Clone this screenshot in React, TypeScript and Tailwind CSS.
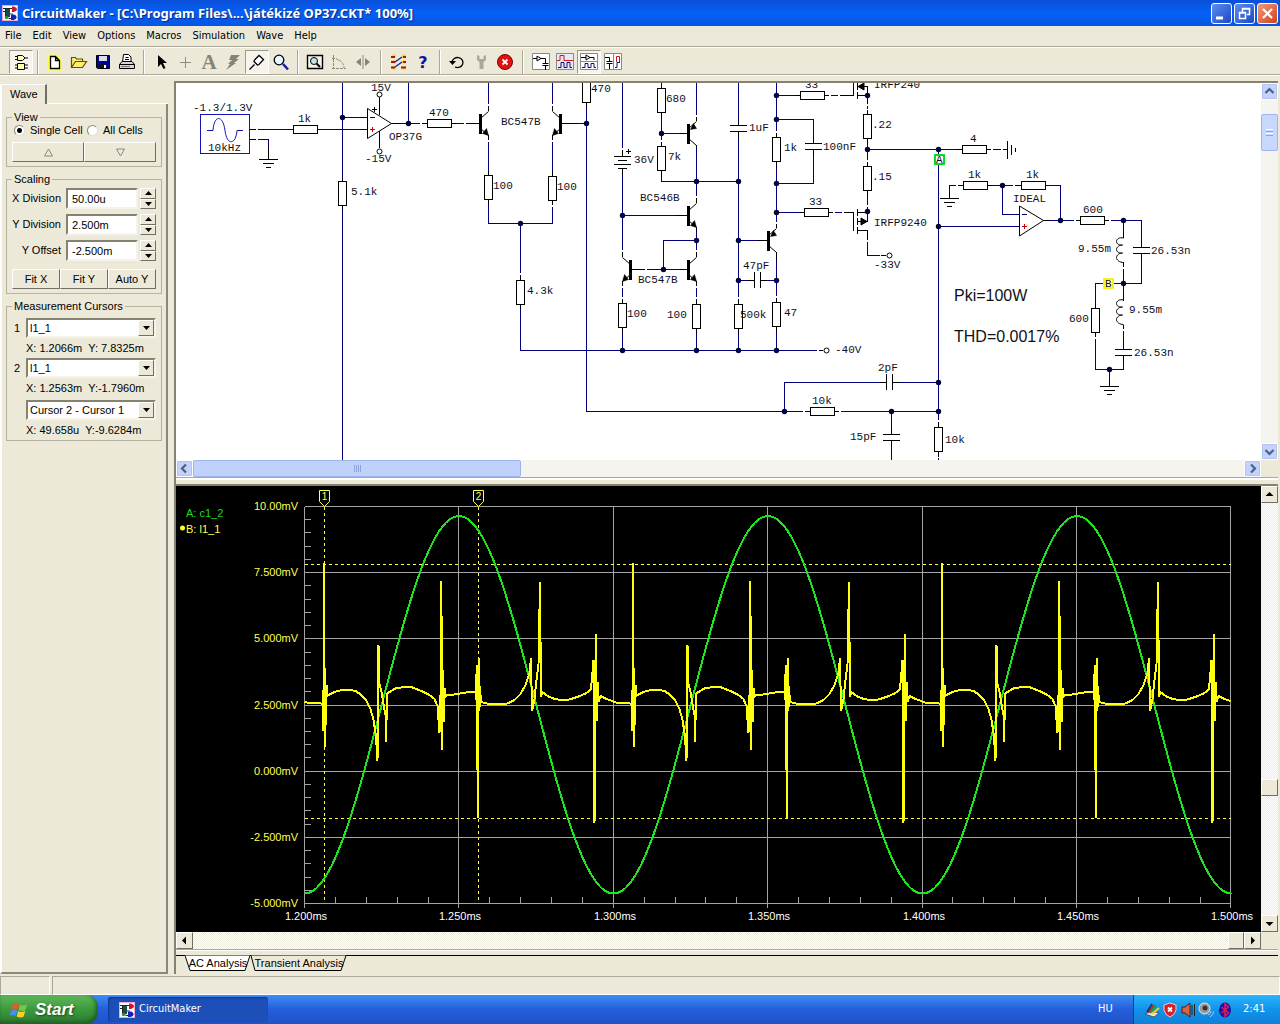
import { useState } from 'react';
import type { ReactNode } from 'react';

const UI = "font-['DejaVu_Sans_Condensed','DejaVu_Sans',sans-serif]";

/* ---------- small shared pieces ---------- */

function AppIcon() {
  return (
    <svg width="16" height="16" viewBox="0 0 16 16" className="shrink-0">
      <rect x="0.5" y="0.5" width="15" height="15" fill="#fff" stroke="#f0a8d0" />
      <path d="M1 3.500h9M1 6.500h5M3.500 3v9h3M6.500 13.500h4" stroke="#222" fill="none" />
      <path d="M4 4h4v8H4z" fill="#1c4a44" />
      <path d="M8 8h3v2H8z" fill="#8ab" />
      <path d="M10 1.500h2q3 1 3 2.700t-3 2.700h-2z" fill="#d0122b" />
      <path d="M9 9.500h2.500q3 .5 3 2.700t-3 2.700H9z" fill="#1420b8" />
      <circle cx="4.500" cy="12.500" r="1.700" fill="#199a3a" />
    </svg>
  );
}

const menus = ['File', 'Edit', 'View', 'Options', 'Macros', 'Simulation', 'Wave', 'Help'];

function TitleBar() {
  return (
    <header className="flex h-[26px] items-center gap-1 bg-linear-to-b from-[#0a4fd8] via-[#0560f6] to-[#0455e4] pl-[2px] pr-[2px]">
      <AppIcon />
      <h1 className="flex-1 whitespace-nowrap font-['Noto_Sans',sans-serif] text-[13px] leading-5 font-bold text-white [text-shadow:1px_1px_1px_#0a2a80]">
        CircuitMaker - [C:\Program Files\...\játékizé OP37.CKT* 100%]
      </h1>
      <div className="flex gap-[2px]">
        <button aria-label="Minimize" className="size-[21px] rounded-[3px] border border-white bg-linear-to-br from-[#5f8df0] to-[#1c47c4]">
          <svg viewBox="0 0 19 19"><path d="M4 14h7" stroke="#fff" strokeWidth="3" /></svg>
        </button>
        <button aria-label="Restore" className="size-[21px] rounded-[3px] border border-white bg-linear-to-br from-[#5f8df0] to-[#1c47c4]">
          <svg viewBox="0 0 19 19">
            <path d="M7.500 8V4.500h7v6H12M7 5h8" stroke="#fff" fill="none" strokeWidth="1.500" />
            <path d="M4.500 8.500h6v6h-6zM4 9h7" stroke="#fff" fill="none" strokeWidth="1.500" />
          </svg>
        </button>
        <button aria-label="Close" className="size-[21px] rounded-[3px] border border-white bg-linear-to-br from-[#f0997c] to-[#d03c12]">
          <svg viewBox="0 0 19 19"><path d="M5 5l9 9M14 5l-9 9" stroke="#fff" strokeWidth="2.200" /></svg>
        </button>
      </div>
    </header>
  );
}

/* ---------- toolbar ---------- */

function Tool({ name, pressed, children }: { name: string; pressed?: boolean; children: ReactNode }) {
  return (
    <button
      aria-label={name}
      className={
        pressed
          ? 'flex h-6 w-6 items-center justify-center border border-t-[#9c9a8c] border-l-[#9c9a8c] border-r-white border-b-white bg-[#f6f4ec]'
          : 'flex h-6 w-6 items-center justify-center'
      }
    >
      <svg width="18" height="18" viewBox="0 0 18 18" className="shrink-0 overflow-visible" fill="none" stroke="#000">
        {children}
      </svg>
    </button>
  );
}

function Sep({ wide }: { wide?: boolean }) {
  return (
    <div className={wide ? 'flex w-3 justify-center' : 'flex w-[10px] justify-center'}>
      <div className="h-6 w-[2px] border-l border-[#aca899] bg-white" />
    </div>
  );
}

function Toolbar() {
  return (
    <div className="flex h-[30px] items-center border-t border-[#aca899] pl-[9px] shadow-[inset_0_1px_0_#fff,inset_0_-1px_0_#fff,inset_0_-2px_0_#aca899]">
      <Tool name="Parts" pressed>
        <path d="M5.500 2.500h5l2.500 2.500-2.500 2.500h-5zM3 3.500h2M3 6.500h2M13 5h3" fill="#ffffb0" />
        <path d="M5.500 10.500h7v6h-7zM3 12h2M3 15h2M13 12h3M13 15h3" fill="#ffffb0" />
      </Tool>
      <Sep />
      <Tool name="New">
        <path d="M4 3.500h6l4 4v8H4z" stroke="#ffff40" strokeWidth="4" />
        <path d="M4.500 3.500h5l4 4v8h-9zM9.500 3.500v4h4" fill="#fff" strokeWidth="1.300" />
      </Tool>
      <Tool name="Open">
        <path d="M1.500 14.500V4.500h4l1 1.500h6v3M1.500 14.500l4-6h11l-4 6z" fill="#ffee70" stroke="#5c5200" strokeWidth="1.200" />
      </Tool>
      <Tool name="Save">
        <path d="M2.500 2.500h13v13h-12l-1-1z" fill="#00009c" />
        <path d="M5 3h8v5H5z" fill="#dcdce8" stroke="none" />
        <path d="M5 11h7v4H5z" fill="#111" stroke="none" />
        <path d="M10 12h2v3h-2z" fill="#fff" stroke="none" />
      </Tool>
      <Tool name="Print">
        <path d="M4.500 9l1-7.500h5l2.500 2.500V9M7.500 4.500h3M7 6.500h4" fill="#fff" />
        <path d="M1.500 11.500l2.500-3h10l2.500 3v4h-15zM1.500 11.500h15" fill="#d8d7d0" />
        <path d="M3 13.500h9" stroke="#777" />
      </Tool>
      <Sep />
      <Tool name="Select">
        <path d="M6 2v12l3-3 2.500 5 2-1-2.500-5h4z" fill="#000" stroke="none" />
      </Tool>
      <Tool name="Wire"><path d="M9.500 4v11M4 9.500h11" stroke="#8e8c80" /></Tool>
      <Tool name="Text">
        <text x="9" y="16" textAnchor="middle" fontFamily="Liberation Serif, serif" fontSize="21" fontWeight="bold" fill="#858478" stroke="none">A</text>
      </Tool>
      <Tool name="Delete">
        <path d="M7 2h9l-4 4h3l-5 4h2L2 17l4-6H4l4-4H5z" fill="#858478" stroke="none" />
      </Tool>
      <Tool name="Probe" pressed>
        <path d="M1.500 16.500l5-5M6 8.500l3.500 3.500 1.500-.5 4.500-5-4.500-4-4.500 4.500z" fill="#fff" strokeWidth="1.300" />
      </Tool>
      <Tool name="Zoom">
        <circle cx="7" cy="7" r="4.800" fill="#e8f4ff" strokeWidth="1.300" />
        <path d="M11 11l5 5.500" stroke="#1620b0" strokeWidth="2.600" />
      </Tool>
      <Sep />
      <Tool name="Fit">
        <path d="M1.500 2.500h15v13h-15z" strokeWidth="1.400" fill="#f4f3ea" />
        <circle cx="8" cy="8" r="3.500" fill="#bfe4ea" />
        <path d="M10.500 10.500l3.500 3.500" strokeWidth="2" />
      </Tool>
      <Tool name="Rotate">
        <path d="M3.500 2v14M2 15.500h14M2 5.500h4l3 2M9 7q5 3 5 8" stroke="#8e8c80" strokeDasharray="3 1" />
      </Tool>
      <Tool name="Mirror">
        <path d="M9 2v14" stroke="#8e8c80" />
        <path d="M7 5v8L2 9zM11 5v8l5-4z" fill="#858478" stroke="none" />
      </Tool>
      <Sep wide />
      <Tool name="Digital">
        <path d="M2 3h4M2 9h4M2 15h4M12 3h4M12 9h4M12 15h4" stroke="#ffd820" strokeWidth="3" />
        <path d="M1 4h4M1 9h4M1 14.500h4M13 4h3M13 9h3M11 14.500h5" stroke="#a01818" strokeWidth="2" />
        <path d="M5 9l7-5M5 14l7-5" stroke="#1020a0" strokeWidth="1.300" />
      </Tool>
      <Tool name="Help">
        <text x="9" y="15" textAnchor="middle" fontFamily="DejaVu Sans, sans-serif" fontSize="16" fontWeight="bold" fill="#1212a8" stroke="none">?</text>
      </Tool>
      <Sep />
      <Tool name="Reset">
        <path d="M4 9a5.500 5 0 1 1 3 5" strokeWidth="1.300" />
        <path d="M1 8h7l-3.500 4z" fill="#000" stroke="none" />
      </Tool>
      <Tool name="Options">
        <path d="M5 2v5l2.500 2v7h4V9L14 7V2l-2.500 1v3h-4V3z" fill="#aaa89c" stroke="none" />
      </Tool>
      <Tool name="Stop">
        <circle cx="9" cy="9" r="7.500" fill="#e01010" stroke="#7c0000" />
        <path d="M6.500 6.500l5 5M11.500 6.500l-5 5" stroke="#fff" strokeWidth="1.800" />
      </Tool>
      <Sep wide />
      <Tool name="Schematic only">
        <path d="M0.500 0.500h17v16h-17z" fill="#fff" stroke="#888" />
        <path d="M1 5.500h4M5 3v5l4-2.500zM9 5.500h4.500V10M10.500 10.500h6M10.500 12.500h6M13.500 13v4" />
      </Tool>
      <Tool name="Waves only">
        <path d="M0.500 0.500h17v16h-17z" fill="#e9e8f4" stroke="#888" />
        <path d="M1 7.500h3v-5h4v5h9" stroke="#d01818" />
        <path d="M2 14.500h3v-5h3v5h3v-5h3v5h2" stroke="#101070" />
      </Tool>
      <Tool name="Split horizontally" pressed>
        <path d="M0.500 0.500h17v16h-17zM0 8.500h18" fill="#fff" stroke="#888" />
        <path d="M1 4.500h5M6 2v5l4-2.500zM10 4.500h4V7" />
        <path d="M2 14.500h3v-4h3v4h3v-4h3v4h2" stroke="#101070" />
      </Tool>
      <Tool name="Split vertically">
        <path d="M0.500 0.500h17v16h-17zM9.500 0v17" fill="#fff" stroke="#888" />
        <path d="M1 4.500h4.500V8M2.500 8.500h6M2.500 10.500h6M5.500 11v5" />
        <path d="M12.500 9V3.500h3V9" stroke="#d01818" />
        <path d="M11 14.500h2V9.500h3" stroke="#101070" />
      </Tool>
    </div>
  );
}

/* ---------- side panel ---------- */

const raised = 'border border-t-white border-l-white border-r-[#716f64] border-b-[#716f64] bg-[#ece9d8]';
const sunken = 'border-2 border-t-[#85836f] border-l-[#85836f] border-r-[#f6f4ea] border-b-[#f6f4ea] bg-white';

function Group({ title, children }: { title: string; children: ReactNode }) {
  return (
    <fieldset className="mb-[6px] border border-[#b5b2a0] px-[5px] pb-1">
      <legend className="px-[2px] leading-3">{title}</legend>
      {children}
    </fieldset>
  );
}

function ScaleRow({ id, label, initial }: { id: string; label: string; initial: string }) {
  const [value, setValue] = useState(initial);
  return (
    <div className="mb-[5px] flex h-[21px] items-center">
      <label htmlFor={id} className="flex-1 whitespace-nowrap pr-[5px] text-right">{label}</label>
      <input
        id={id}
        value={value}
        onChange={(e) => setValue(e.target.value)}
        className={`${sunken} h-[21px] w-[72px] px-1`}
      />
      <div className="ml-[2px] flex h-[21px] w-4 flex-col">
        <button aria-label={`${label} up`} className={`${raised} flex flex-1 items-center justify-center`}>
          <svg width="7" height="4"><path d="M0 4l3.500-4L7 4z" /></svg>
        </button>
        <button aria-label={`${label} down`} className={`${raised} flex flex-1 items-center justify-center`}>
          <svg width="7" height="4"><path d="M0 0l3.500 4L7 0z" /></svg>
        </button>
      </div>
    </div>
  );
}

function CursorSelect({ label, options }: { label: string; options: string[] }) {
  return (
    <div className="relative flex-1">
      <select aria-label={label} className={`${sunken} block h-5 w-full appearance-none pl-[2px]`}>
        {options.map((o) => (
          <option key={o}>{o}</option>
        ))}
      </select>
      <span className={`${raised} pointer-events-none absolute top-[2px] right-[2px] flex h-4 w-4 items-center justify-center`}>
        <svg width="7" height="4"><path d="M0 0l3.500 4L7 0z" /></svg>
      </span>
    </div>
  );
}

function SidePanel() {
  const [view, setView] = useState('single');
  const radio =
    'size-[11px] appearance-none rounded-full border border-t-[#8a887a] border-l-[#8a887a] border-r-[#e4e1d2] border-b-[#e4e1d2] bg-white checked:bg-[radial-gradient(#000_2px,#fff_3px)]';
  return (
    <aside className="flex w-[168px] shrink-0 flex-col pt-2 font-['Liberation_Sans',Arial,sans-serif] text-[11px]">
      <div className="flex h-5">
        <button className="h-5 w-[47px] border-t border-r-2 border-l-2 border-t-white border-r-[#716f64] border-l-white text-left">
          <span className="pl-2">Wave</span>
        </button>
        <div className="flex-1 border-b border-white" />
      </div>
      <div className="flex-1 border-r-2 border-b-2 border-l-2 border-r-[#8a887a] border-b-[#8a887a] border-l-white px-1 pt-[7px]">
        <Group title="View">
          <div className="flex h-[15px] items-center pl-[2px]">
            <input id="single" type="radio" name="cells" className={radio} checked={view === 'single'} onChange={() => setView('single')} />
            <label htmlFor="single" className="w-[62px] pl-[5px] whitespace-nowrap">Single Cell</label>
            <input id="all" type="radio" name="cells" className={radio} checked={view === 'all'} onChange={() => setView('all')} />
            <label htmlFor="all" className="pl-[5px] whitespace-nowrap">All Cells</label>
          </div>
          <div className="mt-1 grid grid-cols-2">
            <button aria-label="Previous cell" className={`${raised} flex h-5 items-center justify-center`}>
              <svg width="11" height="9"><path d="M1.500 8L5.500 1l4 7z" fill="none" stroke="#8a887a" /></svg>
            </button>
            <button aria-label="Next cell" className={`${raised} flex h-5 items-center justify-center`}>
              <svg width="11" height="9"><path d="M1.500 1l4 7 4-7z" fill="none" stroke="#8a887a" /></svg>
            </button>
          </div>
        </Group>
        <Group title="Scaling">
          <div className="pt-[3px]">
            <ScaleRow id="xdiv" label="X Division" initial="50.00u" />
            <ScaleRow id="ydiv" label="Y Division" initial="2.500m" />
            <ScaleRow id="yoff" label="Y Offset" initial="-2.500m" />
          </div>
          <div className="mt-2 grid grid-cols-3">
            <button className={`${raised} h-5`}>Fit X</button>
            <button className={`${raised} h-5`}>Fit Y</button>
            <button className={`${raised} h-5`}>Auto Y</button>
          </div>
        </Group>
        <Group title="Measurement Cursors">
          <div className="flex items-center pt-[6px]">
            <span className="w-[14px] pl-[2px]">1</span>
            <CursorSelect label="Cursor 1 signal" options={['l1_1', 'c1_2']} />
          </div>
          <p className="pl-[14px] leading-5 whitespace-pre">X: 1.2066m  Y: 7.8325m</p>
          <div className="flex items-center">
            <span className="w-[14px] pl-[2px]">2</span>
            <CursorSelect label="Cursor 2 signal" options={['l1_1', 'c1_2']} />
          </div>
          <p className="pl-[14px] leading-5 whitespace-pre">X: 1.2563m  Y:-1.7960m</p>
          <div className="flex pt-[2px] pl-[14px]">
            <CursorSelect label="Difference" options={['Cursor 2 - Cursor 1', 'Cursor 1 - Cursor 2']} />
          </div>
          <p className="-mb-1 pl-[14px] leading-5 whitespace-pre">X: 49.658u  Y:-9.6284m</p>
        </Group>
      </div>
    </aside>
  );
}

/* ---------- schematic ---------- */

// navy connection wires
const wires = [
  'M258 129.500H294M317 129.500H362M258 139.500H268.500V150M342.500 83V177M342.500 210V460M342.500 117.500H362',
  'M400 123.500H420M408.500 83V123.500M456 123.500H464M488.500 83V104M488.500 142V171M488.500 204V223.500H552.500V207M552.500 142V172M552.500 83V104',
  'M520.500 223.500V273M520.500 309V350.500H817M578 123.500H586.500M586.500 107V411.500H803M841 411.500H938.500',
  'M622.500 83V148M622.500 176V250M622.500 215.500H676M622.500 288V297M622.500 333V350.500M647 269.500H680M663.500 269.500V240.500H696.500',
  'M661.500 118V140M661.500 133.500H680M661.500 177V181.500H738.500M696.500 83V115M696.500 147V196M696.500 232V250M696.500 288V297M696.500 334V350.500',
  'M738.500 83V119M738.500 138V297M738.500 334V350.500M738.500 240.500H758M738.500 280.500H748M767 280.500H776.500',
  'M776.500 83V131M776.500 119.500H813.500V137M813.500 156V183.500H776.500M776.500 168V222M776.500 260V296M776.500 332V350.500M776.500 95.500H795M831 95.500H838M776.500 212.500H799M835 212.500H842',
  'M867.500 106V109M867.500 143V160M867.500 196V205M867.500 149.500H956M867.500 242V255.500H880M993 149.500H1001M938.500 149.500V420M938.500 226.500H1019',
  'M949.500 192V185.500H956M992 185.500H1013M1002.500 185.500V214.500H1019M1046 185.500H1060.500V220.500M1050 220.500H1074M1111 220.500H1141.500V241M1141.500 260V283.500H1095.500V303M1123.500 220.500V231M1123.500 269V294',
  'M1123.500 331V343M1123.500 362V369.500H1095.500V339M1109.500 369.500V380M784.500 411.500V382.500H880M899 382.500H938.500M891.500 411.500V428M891.500 447V460M938.500 458V460',
].join('');

// black component leads, plates and ground bars
const leads = [
  'M250 129.500H256M250 139.500H256M268.500 148V159.500M259 159.500H277.500M263 163.500H273.500M266 167.500H270.500',
  'M362 117.500H367.500M362 129.500H367.500M379.500 97V115M379.500 131V148M391 123.500H400M422 123.500H428M451 123.500H456M466 123.500H480M562 123.500H578M342.500 177V182M342.500 205V210',
  'M488.500 106V111M488.500 135V140M552.500 106V111M552.500 135V140M488.500 171V176M488.500 199V204M552.500 172V177M552.500 200V205M520.500 275V280M520.500 304V309M586.500 102V107',
  'M614 156.500H630.500M617.500 160.500H627M614 164.500H630.500M617.500 168.500H627M622.500 150V156M622.500 169V176M676 215.500H688M632 269.500H645M680 269.500H688M680 133.500H688',
  'M622.500 252V257M622.500 281V286M696.500 252V257M696.500 281V286M696.500 198V203M696.500 227V232M696.500 117V121M696.500 145V147M622.500 299V303M622.500 328V333M696.500 299V304M696.500 329V334',
  'M661.500 83V88M661.500 113V118M661.500 142V146M661.500 171V177M730 125.500H746.500M730 131.500H746.500M738.500 119V125M738.500 132V138M738.500 299V304M738.500 329V334',
  'M776.500 133V137M776.500 162V168M776.500 224V228M776.500 252V260M776.500 298V302M776.500 327V332M754.500 272V288M760.500 272V288M748 280.500H754M761 280.500H767M758 240.500H768',
  'M805 143.500H821.500M805 149.500H821.500M813.500 137V143M813.500 150V156M795 95.500H800M825 95.500H829M840 95.500H853.500V83M799 212.500H804M829 212.500H833M844 212.500H853.500V231',
  'M857.500 83V90M857.500 92V99M857.500 95.500H867.500V104M857.500 86.500H867.500V95M867.500 110V114M867.500 139V143M867.500 162V166M867.500 191V196M867.500 207V221.500H857.500M857.500 209V216M857.500 218V225M857.500 227V234M857.500 212.500H867.500M857.500 230.500H867.500V240M819 350.500H823M881 255.500H886',
  'M956 149.500H962M987 149.500H991M1003 149.500H1007M1007.500 141V159M1011.500 145V155M1015.500 148V152M958 185.500H963M988 185.500H992M1015 185.500H1021M949.500 192V198.500M940 198.500H958.500M944 202.500H954.500M947 206.500H951.500',
  'M1043 220.500H1050M1076 220.500H1080M1105 220.500H1109M1133 247.500H1149.500M1133 253.500H1149.500M1141.500 241V247M1141.500 254V260M1115 349.500H1131.500M1115 355.500H1131.500M1123.500 343V349M1123.500 356V362M1095.500 303V308M1095.500 333V337',
  'M1123.500 231V238M1123.500 262V267M1123.500 294V301M1123.500 325V329M1109.500 380V386.500M1100 386.500H1118.500M1104 390.500H1114.500M1107 394.500H1111.500',
  'M886.500 374V390M892.500 374V390M880 382.500H886M893 382.500H899M805 411.500H810M835 411.500H839M883 434.500H899.500M883 440.500H899.500M891.500 428V434M891.500 441V447M938.500 422V427M938.500 452V457',
].join('');

const horizontalResistors = [
  [305, 129], [439, 123], [812, 95], [816, 212], [974, 149], [975, 185], [1033, 185], [1092, 220], [822, 411],
];

const verticalResistors = [
  [342, 193], [488, 187], [552, 188], [586, 90], [520, 292], [622, 315], [696, 316], [661, 100], [661, 158],
  [738, 316], [776, 149], [776, 314], [867, 126], [867, 178], [1095, 320], [938, 439],
];

const dots = [
  [342, 117], [408, 123], [520, 223], [586, 123], [622, 215], [622, 350], [663, 269], [696, 240], [696, 181], [696, 350],
  [661, 133], [738, 181], [738, 240], [738, 280], [738, 350], [776, 95], [776, 119], [776, 183], [776, 212], [776, 280],
  [776, 350], [867, 95], [867, 149], [867, 211], [938, 149], [938, 226], [938, 382], [938, 411], [784, 411], [891, 411],
  [1002, 185], [1060, 220], [1123, 220], [1123, 283], [1109, 369],
];

const partLabels: [number, number, string][] = [
  [193, 111, '-1.3/1.3V'], [208, 151, '10kHz'], [298, 122, '1k'], [371, 91, '15V'], [365, 162, '-15V'], [389, 140, 'OP37G'],
  [429, 116, '470'], [351, 195, '5.1k'], [501, 125, 'BC547B'], [493, 189, '100'], [557, 190, '100'], [591, 92, '470'],
  [527, 294, '4.3k'], [634, 163, '36V'], [666, 102, '680'], [668, 160, '7k'], [640, 201, 'BC546B'], [638, 283, 'BC547B'],
  [627, 317, '100'], [667, 318, '100'], [749, 131, '1uF'], [740, 318, '500k'], [743, 269, '47pF'], [784, 151, '1k'],
  [784, 316, '47'], [823, 150, '100nF'], [805, 88, '33'], [809, 205, '33'], [872, 128, '.22'], [872, 180, '.15'],
  [874, 88, 'IRFP240'], [874, 226, 'IRFP9240'], [874, 268, '-33V'], [835, 353, '-40V'], [878, 371, '2pF'], [812, 404, '10k'],
  [850, 440, '15pF'], [945, 443, '10k'], [970, 142, '4'], [968, 178, '1k'], [1026, 178, '1k'], [1013, 202, 'IDEAL'],
  [1083, 213, '600'], [1078, 252, '9.55m'], [1151, 254, '26.53n'], [1069, 322, '600'], [1129, 313, '9.55m'], [1134, 356, '26.53n'],
];

// x, y of the base bar, side the leads are on, pnp has its arrow on top
const transistors: [number, number, number, boolean][] = [
  [480, 123, 1, false], [560, 123, -1, false], [688, 133, 1, true], [688, 215, 1, false],
  [630, 269, -1, false], [688, 269, 1, false], [768, 240, 1, true],
];

function Transistor({ x, y, side, pnp }: { x: number; y: number; side: number; pnp: boolean }) {
  const end = x + side * 8;
  const tip = pnp
    ? `M${x + side * 2} ${y - 4}l${side * 3} -6l${side * 3} 5z`
    : `M${end} ${y + 12}l${-side * 2} -7l${-side * 4} 5z`;
  return (
    <g transform="translate(0.5 0.5)" stroke="#000">
      <path d={`M${x} ${y - 5}L${end} ${y - 12}M${x} ${y + 5}L${end} ${y + 12}`} />
      <path d={`M${x} ${y - 10}v20`} strokeWidth="3" shapeRendering="crispEdges" />
      <path d={tip} fill="#000" strokeWidth="0.500" />
    </g>
  );
}

function Schematic() {
  return (
    <svg width="1085" height="377" viewBox="176 83 1085 377" className="block shrink-0" fill="none">
      <path d={wires} stroke="#00007c" shapeRendering="crispEdges" />
      <path d={leads} stroke="#000" shapeRendering="crispEdges" />
      {horizontalResistors.map(([x, y]) => (
        <rect key={`${x}-${y}`} x={x - 11.5} y={y - 3.5} width="24" height="8" fill="#fff" stroke="#000" shapeRendering="crispEdges" />
      ))}
      {verticalResistors.map(([x, y]) => (
        <rect key={`${x}-${y}`} x={x - 3.5} y={y - 11.5} width="8" height="24" fill="#fff" stroke="#000" shapeRendering="crispEdges" />
      ))}
      {dots.map(([x, y]) => (
        <circle key={`${x}-${y}`} cx={x + 0.5} cy={y + 0.5} r="2.700" fill="#04043c" />
      ))}
      {transistors.map(([x, y, side, pnp]) => (
        <Transistor key={`${x}-${y}`} x={x} y={y} side={side} pnp={pnp} />
      ))}

      {/* signal source */}
      <rect x="200.500" y="114.500" width="49" height="39" stroke="#1414b4" shapeRendering="crispEdges" />
      <path d="M207 130.500h6c1-16 10-16 12 0s11 14 12 0h6" stroke="#1414b4" />

      {/* op amps */}
      <path d="M367.500 108.500v30l24-15zM1019.500 206v30l24-15.500z" fill="#fff" stroke="#000" />
      <path d="M379.500 97v18M379.500 131v17M372 109.500h5M374.500 107v5" stroke="#000" />
      <path d="M370 117.500h5M1022 214.500h5" stroke="#00007c" />
      <path d="M370 129.500h5M372.500 127v5M1022 226.500h5M1024.500 224v5" stroke="#d00000" />

      {/* coils */}
      <path
        d="M1123.500 238c-4-1-7 1-7 3.500s3 4 6 3.500c-3 0-6 2-6 4.500s3 4 6 3.500c-3 0-6 2-6 4.500s3 5 7 5M1123.500 300c-4-1-7 1-7 3.500s3 4 6 3.500c-3 0-6 2-6 4.500s3 4 6 3.500c-3 0-6 2-6 4.500s3 5 7 5"
        stroke="#000"
      />

      {/* mosfet arrows, battery sign */}
      <path d="M867 221.500l-6-3.500v7zM858 86.500l6-3.500v7z" fill="#000" stroke="#000" />
      <path d="M626 151.500h5M628.500 149v5" stroke="#000" />

      {[[379, 94], [379, 151], [826, 350], [889, 255]].map(([x, y]) => (
        <circle key={`${x}-${y}`} cx={x + 0.5} cy={y + 0.5} r="2.500" fill="#fff" stroke="#000" />
      ))}

      <g fill="#10101c" fontFamily="Liberation Mono, Courier New, monospace" fontSize="11">
        {partLabels.map(([x, y, text]) => (
          <text key={`${x}-${y}`} x={x} y={y}>{text}</text>
        ))}
        <rect x="935" y="155" width="9" height="9" fill="#fff" stroke="#08dc28" strokeWidth="2" />
        <text x="936" y="163">A</text>
        <rect x="1104" y="279" width="9" height="9" fill="#fffcb4" stroke="#f8f020" strokeWidth="2" />
        <text x="1105" y="287">B</text>
      </g>
      <g fill="#101018" fontFamily="Liberation Sans, Arial, sans-serif" fontSize="16">
        <text x="954" y="301">Pki=100W</text>
        <text x="954" y="342">THD=0.0017%</text>
      </g>
    </svg>
  );
}

/* ---------- wave plot ---------- */

const LEFT = 304.5;
const TOP = 506.5;
const PERIOD = 309;
const STEP_X = 154.4;
const STEP_Y = 66.17;

// one period of trace B, x relative to the left axis
const ripple: [number, number][] = [
  [0, 702], [5, 703], [16, 703], [18, 705], [18, 690], [18.5, 731], [19.5, 677], [19.7, 563], [20.2, 747], [20.7, 668], [21.5, 725],
  [22, 685], [22.5, 696], [24, 695], [30, 692], [37, 690], [44, 689.5], [51, 691], [57, 695], [62, 701], [66, 709], [69, 720],
  [71, 733], [72, 745], [73, 761], [74, 645], [75, 684], [77, 692], [79, 704], [81, 715], [81.7, 742], [82.4, 694], [85, 692],
  [91, 688.5], [99, 687], [108, 687.5], [117, 691], [125, 695], [130, 699], [133, 706], [135, 733], [136, 700], [136.3, 581], [137.3, 630],
  [137.7, 750], [138.4, 670], [139.2, 722], [140, 688], [140.7, 698], [142, 695], [150, 694.5], [158, 693], [165, 692], [171, 692],
  [171.7, 674], [172, 700], [172.8, 665], [173.1, 818], [174.1, 658], [174.9, 711], [175.6, 686], [176.3, 702], [182, 703.5], [193, 704],
  [203, 703.5], [210, 700], [216, 694], [221, 685], [225, 673], [226.5, 658], [227.5, 711], [230, 699], [232, 680], [234, 664],
  [235.5, 582], [236.5, 697], [238, 692], [243, 696], [250, 699], [257, 700], [265, 699.5], [274, 696.5], [282, 693], [286.5, 689],
  [287.5, 678], [289, 660], [290, 823], [291.4, 634], [292.5, 721], [293.4, 682], [294.2, 702], [296, 696], [302, 699], [308, 701],
];

const trace = [0, 1, 2]
  .flatMap((n) => ripple.map(([x, y]) => `${LEFT + n * PERIOD + x},${y}`))
  .join(' ');

const sine = Array.from({ length: 310 }, (_, i) => {
  const x = i * 3;
  return `${LEFT + x},${704.8 + 188.8 * Math.cos((x / PERIOD) * 2 * Math.PI)}`;
}).join(' ');

const yLabels = ['10.00mV', '7.500mV', '5.000mV', '2.500mV', '0.000mV', '-2.500mV', '-5.000mV'];
const xLabels = ['1.200ms', '1.250ms', '1.300ms', '1.350ms', '1.400ms', '1.450ms', '1.500ms'];

function WavePlot() {
  return (
    <svg viewBox="176 486 1085 446" preserveAspectRatio="xMinYMin meet" className="block min-w-0 flex-1 bg-black" fill="none">
      <g stroke="#a4a4a4" shapeRendering="crispEdges">
        {xLabels.map((l, i) => (
          <path key={l} d={`M${Math.round(304 + i * STEP_X) + 0.5} ${TOP}V908`} />
        ))}
        {yLabels.map((l, i) => (
          <path key={l} d={`M${LEFT} ${Math.round(506 + i * STEP_Y) + 0.5}H1231`} />
        ))}
        {Array.from({ length: 30 }, (_, i) => (
          <path key={i} d={`M${LEFT} ${Math.round(506 + (i * STEP_Y) / 5) + 0.5}h6M${Math.round(304 + (i * STEP_X) / 5) + 0.5} 896.5v7`} />
        ))}
      </g>
      <g stroke="#ffff40" strokeDasharray="3 3" shapeRendering="crispEdges">
        <path d="M305 564.500H1231M305 818.500H1231M324.500 507V903M478.500 507V903" />
      </g>
      <polyline points={sine} stroke="#1ee61e" strokeWidth="2" shapeRendering="crispEdges" />
      <polyline points={trace} stroke="#ffff10" strokeWidth="2" strokeLinejoin="bevel" shapeRendering="crispEdges" />
      <path d="M319.500 490.500h10v11l-5 5l-5 -5zM473.500 490.500h10v11l-5 5l-5 -5z" stroke="#ffff60" fill="#000" />
      <circle cx="182.500" cy="528" r="2.500" fill="#ffff20" />
      <g fontFamily="Liberation Sans, Arial, sans-serif" fontSize="11" fill="#ffff50">
        <text x="324.500" y="500" textAnchor="middle" fontSize="10">1</text>
        <text x="478.500" y="500" textAnchor="middle" fontSize="10">2</text>
        <text x="186" y="517" fill="#1ed81e">A: c1_2</text>
        <text x="186" y="533">B: l1_1</text>
        {yLabels.map((l, i) => (
          <text key={l} x="298" y={Math.round(510 + i * STEP_Y)} textAnchor="end">{l}</text>
        ))}
        {xLabels.map((l, i) => (
          <text key={l} x={Math.round(306 + i * STEP_X)} y="920" textAnchor="middle" fill="#fff">{l}</text>
        ))}
      </g>
    </svg>
  );
}

/* ---------- scroll bars ---------- */

const arrows = {
  up: 'M4.500 10l4-4 4 4',
  down: 'M4.500 7l4 4 4-4',
  left: 'M10 4.500l-4 4 4 4',
  right: 'M7 4.500l4 4-4 4',
};

function XpButton({ dir }: { dir: keyof typeof arrows }) {
  return (
    <button aria-label={`Scroll ${dir}`} className="size-[17px] shrink-0 rounded-[2px] border border-white bg-[#c3d3fb] shadow-[inset_0_0_0_1px_#b0c4f4]">
      <svg viewBox="1 1 15 15"><path d={arrows[dir]} fill="none" stroke="#4a6184" strokeWidth="2.200" /></svg>
    </button>
  );
}

function ClassicButton({ dir }: { dir: keyof typeof arrows }) {
  return (
    <button aria-label={`Scroll ${dir}`} className={`${raised} size-[17px] shrink-0`}>
      <svg viewBox="1 1 15 15"><path d={`${arrows[dir]}z`} fill="#000" /></svg>
    </button>
  );
}

const track = 'bg-[#f8f7f2] bg-[repeating-conic-gradient(#fff_0_25%,#eeebdf_0_50%)] bg-[length:2px_2px]';

function Workspace() {
  return (
    <main className="ml-[6px] flex min-w-0 flex-1 flex-col pt-[5px] pr-[2px]">
      <div className="flex flex-1 flex-col border-t-2 border-l-2 border-[#85836f]">
        <div className="flex h-[377px]">
          <div className="min-w-0 flex-1 overflow-hidden bg-white">
            <Schematic />
          </div>
          <div className="flex w-[17px] flex-col bg-[#f5f4ee]">
            <XpButton dir="up" />
            <div className="mt-[14px] flex h-[37px] flex-col items-center justify-center gap-[1px] rounded-[2px] border border-[#9db5ee] bg-[#c8d7fc]">
              <i className="h-px w-[7px] bg-white" />
              <i className="h-px w-[7px] bg-[#8ca5e0]" />
              <i className="h-px w-[7px] bg-white" />
              <i className="h-px w-[7px] bg-[#8ca5e0]" />
            </div>
            <div className="flex-1" />
            <XpButton dir="down" />
          </div>
        </div>
        <div className="flex h-[17px] pr-[17px]">
          <div className="flex flex-1 bg-[#f5f4ee]">
            <XpButton dir="left" />
            <div className="flex w-[328px] items-center justify-center gap-[1px] rounded-[2px] border border-[#9db5ee] bg-[#c0d2fc]">
              <i className="h-[7px] w-px bg-[#8ca5e0]" />
              <i className="h-[7px] w-px bg-[#8ca5e0]" />
              <i className="h-[7px] w-px bg-[#8ca5e0]" />
              <i className="h-[7px] w-px bg-[#8ca5e0]" />
            </div>
            <div className="flex-1" />
            <XpButton dir="right" />
          </div>
        </div>
        <div className="h-[9px] border-t border-b-2 border-t-[#aca899] border-b-[#85836f] shadow-[inset_0_2px_0_#fff]" />

        <div className="flex min-h-[446px] flex-1">
          <WavePlot />
          <div className={`${track} flex w-[17px] flex-col`}>
            <ClassicButton dir="up" />
            <div className="flex-[276]" />
            <div className={`${raised} h-[17px]`} />
            <div className="flex-[119]" />
            <ClassicButton dir="down" />
          </div>
        </div>
        <div className="flex h-[17px] pr-[17px]">
          <div className={`${track} flex flex-1`}>
            <ClassicButton dir="left" />
            <div className="flex-1" />
            <div className={`${raised} w-4`} />
            <ClassicButton dir="right" />
          </div>
        </div>
        <div className="h-[25px] border-t border-[#aca899] pt-[5px] shadow-[inset_0_1px_0_#fff]">
          <div className="flex h-4 border-t border-black pl-[9px] font-['Liberation_Sans',Arial,sans-serif] text-[11px] leading-4">
            <button className="relative -mt-px h-4 w-[66px]">
              <svg width="66" height="16" className="absolute inset-0"><path d="M0 0.500L5 15.500H60L65 0.500" fill="#fff" stroke="#000" /></svg>
              <span className="relative">AC Analysis</span>
            </button>
            <button className="relative -mt-px h-4 w-24">
              <svg width="96" height="16" className="absolute inset-0"><path d="M0 0.500L4 15.500H90L95 0.500" fill="#ece9d8" stroke="#000" /></svg>
              <span className="relative">Transient Analysis</span>
            </button>
          </div>
        </div>
      </div>
    </main>
  );
}

/* ---------- task bar ---------- */

function TaskBar() {
  return (
    <footer className={`${UI} flex h-[29px] items-center bg-linear-to-b from-[#3f8cf3] via-[#245edb] to-[#1f52c8] text-[11px] text-white`}>
      <button className="flex h-full w-[98px] items-center gap-[6px] rounded-r-xl bg-linear-to-b from-[#5fb85c] via-[#3a9a3c] to-[#2c7a30] pl-[10px] shadow-[inset_-2px_-2px_4px_#1f5a24]">
        <svg width="19" height="18" viewBox="0 0 19 18">
          <path d="M3 3q3-2 6 0L7.500 8.500q-3-2-6 0z" fill="#e8582a" />
          <path d="M10 3.500q3 2 7 0L15.500 9q-3 2-7 0z" fill="#7ac543" />
          <path d="M1.200 9.500q3-2 6 0L5.700 15q-3-2-6 0z" fill="#4a8df0" />
          <path d="M8.200 10q3 2 7 0l-1.500 5.500q-3 2-7 0z" fill="#fccf30" />
        </svg>
        <span className="font-['Liberation_Sans',Arial,sans-serif] text-[17px] leading-5 font-bold italic [text-shadow:1px_1px_2px_#164a18]">Start</span>
      </button>
      <button className="ml-[10px] flex h-[25px] w-40 items-center gap-1 rounded-[3px] bg-[#1c4fb8] pl-[11px] shadow-[inset_1px_1px_2px_#0d3590]">
        <AppIcon />
        CircuitMaker
      </button>
      <div className="flex-1" />
      <span className="w-[35px]">HU</span>
      <div className="flex h-full w-[147px] items-center gap-[2px] border-l border-[#0b3f9c] bg-linear-to-b from-[#2ab4fa] via-[#1293ea] to-[#0f80d8] pl-[10px]">
        <svg width="16" height="16" viewBox="0 0 16 16">
          <path d="M1 12l6-3 8 2-5 4z" fill="#e8e8f0" stroke="#333" strokeWidth="0.700" />
          <path d="M4 11L10 3" stroke="#d02020" strokeWidth="2" />
          <path d="M6 11l6-7" stroke="#20a030" strokeWidth="2" />
          <path d="M8 12l7-6" stroke="#f0d020" strokeWidth="2" />
          <path d="M3 10l5-8" stroke="#202080" strokeWidth="1.500" />
        </svg>
        <svg width="16" height="16" viewBox="0 0 16 16">
          <path d="M8 1l6 2v5q-1 5-6 7Q3 13 2 8V3z" fill="#d81e28" stroke="#f4c8c8" />
          <path d="M6 5.500l4 4M10 5.500l-4 4" stroke="#fff" strokeWidth="1.800" />
        </svg>
        <svg width="16" height="16" viewBox="0 0 16 16">
          <path d="M2 5h3l5-4v14l-5-4H2z" fill="#d8643c" stroke="#521c10" />
          <path d="M12 3v10M14.500 2v12" stroke="#222" />
        </svg>
        <svg width="16" height="16" viewBox="0 0 16 16">
          <circle cx="6.500" cy="6.500" r="5.500" fill="#9a9a98" stroke="#eee" />
          <circle cx="7" cy="6" r="2.500" fill="#333" />
          <path d="M10 13q3-1 3-4M12 15q3-2 4-6" stroke="#9cd0ff" fill="none" />
        </svg>
        <svg width="16" height="16" viewBox="0 0 16 16" className="ml-[1px]">
          <ellipse cx="8" cy="8" rx="6" ry="7.500" fill="#1414b4" />
          <path d="M4.500 5l7 6L8 14V2l3.500 3-7 6" stroke="#e81e3c" fill="none" strokeWidth="1.500" />
        </svg>
        <time className="ml-2">2:41</time>
      </div>
    </footer>
  );
}

export default function App() {
  return (
    <div className="flex min-h-screen flex-col overflow-hidden bg-[#ece9d8] text-black">
      <TitleBar />
      <nav className={`${UI} flex h-5 items-center text-[11px] leading-4`}>
        {menus.map((m) => (
          <button key={m} className="pr-[6px] pl-[5px]">{m}</button>
        ))}
      </nav>
      <Toolbar />
      <div className="flex flex-1">
        <SidePanel />
        <Workspace />
      </div>
      <div className="flex h-[21px] gap-[2px] pt-[2px]">
        <div className="w-[50px] border border-t-[#aca899] border-r-white border-b-white border-l-[#aca899]" />
        <div className="flex-1 border border-t-[#aca899] border-r-white border-b-white border-l-[#aca899]" />
      </div>
      <TaskBar />
    </div>
  );
}
